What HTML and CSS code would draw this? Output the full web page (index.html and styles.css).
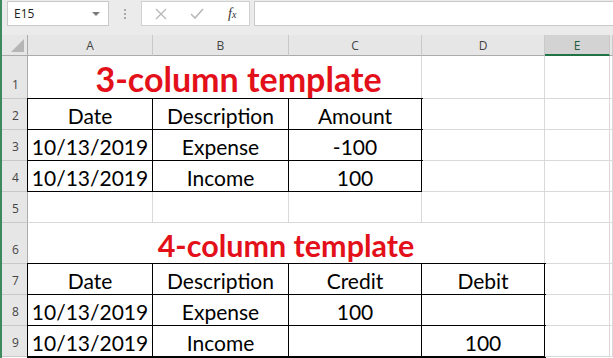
FILE: index.html
```html
<!DOCTYPE html>
<html lang="en">
<head>
    <meta charset="UTF-8">
    <title>Templates</title>
    <link rel="stylesheet" href="styles.css">
</head>
<body>
    <div class="app">
        <!-- Строка формул -->
        <div class="formula-bar">
            <div class="name-box">
                <span>E15</span>
                <span class="caret"></span>
            </div>
            <div class="grip"><i></i><i></i><i></i></div>
            <div class="fx-buttons">
                <svg class="btn-icon" width="14" height="14" viewBox="0 0 14 14"><path d="M2 2 L12 12 M12 2 L2 12" stroke="#b9b9b9" stroke-width="1.4" fill="none"/></svg>
                <svg class="btn-icon" width="16" height="14" viewBox="0 0 16 14"><path d="M2 7 L6 11 L14 2" stroke="#b9b9b9" stroke-width="1.6" fill="none"/></svg>
                <span class="fx">f<sub>x</sub></span>
            </div>
            <div class="formula-input"></div>
        </div>

        <!-- Лист -->
        <div class="sheet">
            <div class="corner"><span class="tri"></span></div>
            <div class="ch">A</div>
            <div class="ch">B</div>
            <div class="ch">C</div>
            <div class="ch">D</div>
            <div class="ch selected">E</div>
            <div class="ch"></div>

            <div class="rh">1</div>
            <div class="c title t1">3-column template</div>
            <div class="c"></div>
            <div class="c"></div>
            <div class="c"></div>

            <div class="rh">2</div>
            <div class="c b">Date</div>
            <div class="c b">Description</div>
            <div class="c b">Amount</div>
            <div class="c"></div>
            <div class="c"></div>
            <div class="c"></div>

            <div class="rh">3</div>
            <div class="c b">10/13/2019</div>
            <div class="c b">Expense</div>
            <div class="c b">-100</div>
            <div class="c"></div>
            <div class="c"></div>
            <div class="c"></div>

            <div class="rh">4</div>
            <div class="c b">10/13/2019</div>
            <div class="c b">Income</div>
            <div class="c b">100</div>
            <div class="c"></div>
            <div class="c"></div>
            <div class="c"></div>

            <div class="rh">5</div>
            <div class="c"></div>
            <div class="c"></div>
            <div class="c"></div>
            <div class="c"></div>
            <div class="c"></div>
            <div class="c"></div>

            <div class="rh">6</div>
            <div class="c title t2">4-column template</div>
            <div class="c"></div>
            <div class="c"></div>

            <div class="rh">7</div>
            <div class="c b">Date</div>
            <div class="c b">Description</div>
            <div class="c b">Credit</div>
            <div class="c b">Debit</div>
            <div class="c"></div>
            <div class="c"></div>

            <div class="rh">8</div>
            <div class="c b">10/13/2019</div>
            <div class="c b">Expense</div>
            <div class="c b">100</div>
            <div class="c b"></div>
            <div class="c"></div>
            <div class="c"></div>

            <div class="rh">9</div>
            <div class="c b">10/13/2019</div>
            <div class="c b">Income</div>
            <div class="c b"></div>
            <div class="c b">100</div>
            <div class="c"></div>
            <div class="c"></div>
        </div>
    </div>
</body>
</html>
```

FILE: styles.css
```css
:root {
    --grid: #d9d9d9;
    --head: #e6e6e6;
    --head-line: #ababab;
    --excel-green: #217346;
    --red: #e3101a;
}

* {
    box-sizing: border-box;
    margin: 0;
    padding: 0;
}

body {
    width: 613px;
    height: 358px;
    overflow: hidden;
    background: #fff;
    font-family: 'Open Sans', 'Noto Sans', sans-serif;
}

.app {
    border-left: 2px solid #3d8a5c;
    height: 358px;
    background: #fff;
}

/* Строка формул */
.formula-bar {
    height: 35px;
    background: #ebebeb;
    display: flex;
    align-items: flex-start;
    padding-top: 1px;
}

.name-box {
    width: 102px;
    height: 25px;
    margin-left: 5px;
    background: #fff;
    border: 1px solid #c9c9c9;
    display: flex;
    align-items: center;
    justify-content: space-between;
    padding: 0 8px 0 6px;
    font-size: 12px;
    color: #222;
}

.caret {
    width: 0;
    height: 0;
    border-left: 4px solid transparent;
    border-right: 4px solid transparent;
    border-top: 4px solid #7a7a7a;
}

.grip {
    width: 32px;
    height: 25px;
    display: flex;
    flex-direction: column;
    align-items: center;
    justify-content: center;
    gap: 2px;
}

.grip i {
    width: 2px;
    height: 2px;
    background: #a8a8a8;
}

.fx-buttons {
    width: 109px;
    height: 25px;
    background: #fff;
    border: 1px solid #d0d0d0;
    display: flex;
    align-items: center;
    padding-left: 12px;
    gap: 21px;
}

.fx {
    font-family: 'Liberation Serif', serif;
    font-style: italic;
    font-size: 14px;
    color: #333;
    margin-left: 2px;
}

.fx sub {
    font-size: 10px;
    vertical-align: 0;
}

.formula-input {
    flex: 1;
    height: 25px;
    margin-left: 4px;
    background: #fff;
    border: 1px solid #c9c9c9;
    border-right: none;
}

/* Лист */
.sheet {
    display: grid;
    grid-template-columns: 26px 125px 136px 133px 123px 65px 1fr;
    grid-template-rows: 21px 43px 31px 31px 31px 31px 41px 31px 31px 31px;
}

.corner,
.ch,
.rh {
    background: var(--head);
    color: #444;
    font-size: 12px;
}

.corner {
    border-right: 1px solid var(--head-line);
    border-bottom: 1px solid var(--head-line);
    position: relative;
}

.corner .tri {
    position: absolute;
    right: 3px;
    bottom: 3px;
    width: 0;
    height: 0;
    border-left: 13px solid transparent;
    border-bottom: 13px solid #b5b5b5;
}

.ch {
    border-right: 1px solid #c9c9c9;
    border-bottom: 1px solid var(--head-line);
    display: flex;
    align-items: center;
    justify-content: center;
    padding-top: 1px;
}

.ch.selected {
    background: #d3d3d3;
    color: #215c3a;
    border-bottom: 2px solid var(--excel-green);
}

.rh {
    border-right: 1px solid var(--head-line);
    border-bottom: 1px solid #c9c9c9;
    display: flex;
    align-items: flex-end;
    justify-content: center;
    padding: 0 0 5px 2px;
}

.c {
    background: #fff;
    border-right: 1px solid var(--grid);
    border-bottom: 1px solid var(--grid);
    display: flex;
    align-items: flex-end;
    justify-content: center;
    padding-bottom: 3px;
    font-family: 'Lato', 'Carlito', sans-serif;
    font-size: 21px;
    line-height: 1;
    color: #000;
    white-space: nowrap;
}

/* ячейки таблицы с черной рамкой */
.c.b {
    border-right-color: #000;
    border-bottom-color: #000;
    box-shadow: 0 0 0 1px #000;
}

.title {
    font-weight: bold;
    color: var(--red);
}

.t1 {
    grid-column: span 3;
    font-size: 34px;
    padding-left: 28px;
    padding-bottom: 2px;
}

.t2 {
    grid-column: span 4;
    font-size: 30.5px;
    padding-bottom: 3px;
}
```
